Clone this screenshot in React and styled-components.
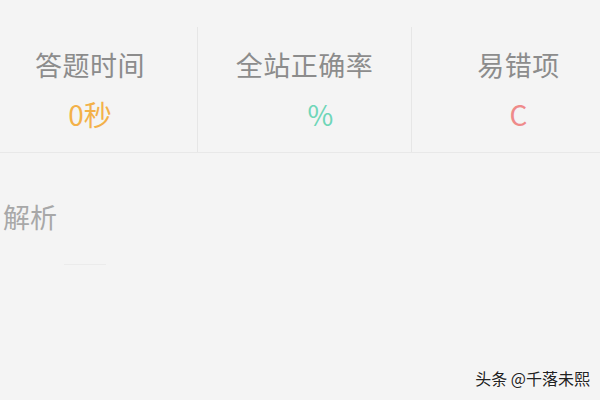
import React from 'react';
import styled, { createGlobalStyle } from 'styled-components';

const GlobalStyle = createGlobalStyle`
  html, body {
    margin: 0;
    padding: 0;
    background: #f4f4f4;
  }
  body {
    font-family: "Noto Sans CJK SC", "Noto Sans", sans-serif;
    overflow: hidden;
  }
`;

const Page = styled.div`
  width: 600px;
  height: 400px;
  background: #f4f4f4;
  position: relative;
  overflow: hidden;
  padding-top: 27px;
  box-sizing: border-box;
`;

const StatsRow = styled.div`
  display: grid;
  grid-template-columns: repeat(3, 214px);
  margin-left: -17px;
  width: 642px;
  height: 125px;
  border-bottom: 1px solid #e8e8e8;
`;

const StatCell = styled.div`
  display: flex;
  flex-direction: column;
  align-items: center;
  padding-top: 18px;
  border-left: ${(p) => (p.$first ? 'none' : '1px solid #e6e6e6')};
`;

const StatLabel = styled.div`
  font-size: 27px;
  line-height: 40px;
  color: #8c8c8c;
  letter-spacing: 0.5px;
`;

const StatValue = styled.div`
  margin-top: 12px;
  padding-left: ${(p) => p.$indent || 0}px;
  font-size: 28px;
  line-height: 34px;
  color: ${(p) => p.$color};
`;

const Section = styled.div`
  padding: 46px 0 0 3px;
`;

const SectionTitle = styled.div`
  font-size: 27px;
  line-height: 36px;
  color: #a8a8a8;
`;

const FaintRule = styled.div`
  margin: 29px 0 0 61px;
  width: 42px;
  height: 1px;
  background: #ebebeb;
`;

const Watermark = styled.div`
  position: absolute;
  right: 10px;
  bottom: 10px;
  font-size: 16px;
  color: #222;
  text-shadow: 0 0 2px #fff, 0 0 1px #fff;
`;

const stats = [
  { label: '答题时间', value: '0秒', color: '#f3b149' },
  { label: '全站正确率', value: '%', color: '#6fd6b8', indent: 32 },
  { label: '易错项', value: 'C', color: '#ef8a8a' },
];

export default function App() {
  return (
    <>
      <GlobalStyle />
      <Page>
        <StatsRow>
          {stats.map((s, i) => (
            <StatCell key={s.label} $first={i === 0}>
              <StatLabel>{s.label}</StatLabel>
              <StatValue $color={s.color} $indent={s.indent}>
                {s.value}
              </StatValue>
            </StatCell>
          ))}
        </StatsRow>
        <Section>
          <SectionTitle>解析</SectionTitle>
          <FaintRule />
        </Section>
        <Watermark>头条 @千落未熙</Watermark>
      </Page>
    </>
  );
}
